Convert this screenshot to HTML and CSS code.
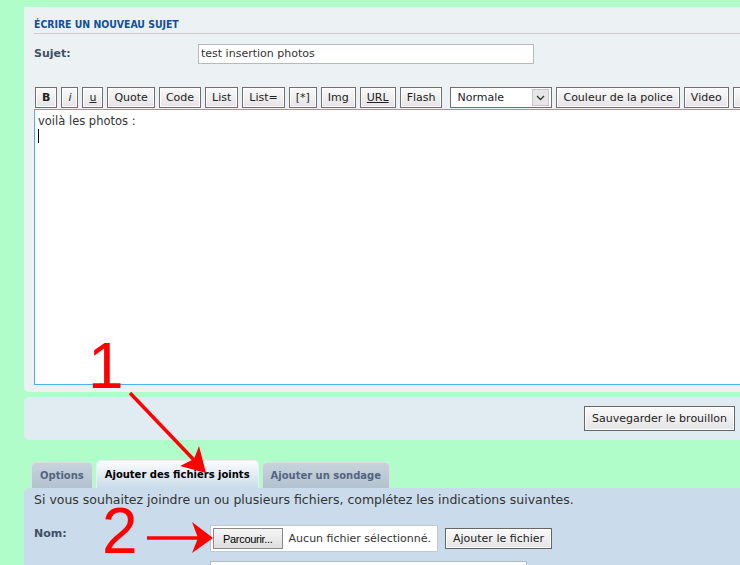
FILE: index.html
```html
<!DOCTYPE html>
<html lang="fr">
<head>
    <meta charset="UTF-8">
    <title>Écrire un nouveau sujet</title>
    <link rel="stylesheet" href="styles.css">
</head>
<body>
    <div class="page">
        <div class="panel compose">
            <h3 class="title">Écrire un nouveau sujet</h3>
            <div class="field">
                <label class="label">Sujet:</label>
                <div class="text-input">test insertion photos</div>
            </div>
            <div class="toolbar">
                <span class="btn bold">B</span>
                <span class="btn italic">i</span>
                <span class="btn under">u</span>
                <span class="btn">Quote</span>
                <span class="btn">Code</span>
                <span class="btn">List</span>
                <span class="btn">List=</span>
                <span class="btn">[*]</span>
                <span class="btn">Img</span>
                <span class="btn under">URL</span>
                <span class="btn">Flash</span>
                <span class="select">Normale<span class="select-arrow"><svg width="9" height="6" viewBox="0 0 9 6"><path d="M1 1 L4.5 4.5 L8 1" fill="none" stroke="#333" stroke-width="1.3"/></svg></span></span>
                <span class="btn">Couleur de la police</span>
                <span class="btn">Video</span>
                <span class="btn">Lien</span>
            </div>
            <div class="editor">voilà les photos :<br><span class="caret"></span></div>
        </div>

        <div class="panel actions">
            <span class="btn big">Sauvegarder le brouillon</span>
        </div>

        <div class="tabs">
            <span class="tab">Options</span>
            <span class="tab active">Ajouter des fichiers joints</span>
            <span class="tab">Ajouter un sondage</span>
        </div>

        <div class="panel attach">
            <p class="hint">Si vous souhaitez joindre un ou plusieurs fichiers, complétez les indications suivantes.</p>
            <div class="field">
                <label class="label wide">Nom:</label>
                <div class="file-input">
                    <span class="browse">Parcourir...</span>
                    <span class="file-name">Aucun fichier sélectionné.</span>
                </div>
                <span class="btn big add">Ajouter le fichier</span>
            </div>
            <div class="field next">
                <label class="label wide"></label>
                <div class="text-input long"></div>
            </div>
        </div>
    </div>

    <!-- annotations drawn over the screenshot -->
    <div class="num one">1</div>
    <div class="num two">2</div>
    <svg class="arrows" width="740" height="565" viewBox="0 0 740 565">
        <line x1="130" y1="393" x2="194" y2="460" stroke="#f00" stroke-width="3.5"/>
        <polygon points="206,473 180,466 194,459 199,446" fill="#f00"/>
        <line x1="147" y1="538" x2="198" y2="538" stroke="#f00" stroke-width="3.5"/>
        <polygon points="213,538 192,522 198,538 192,553" fill="#f00"/>
    </svg>
</body>
</html>
```

FILE: styles.css
```css
html, body {
    margin: 0;
    overflow: hidden;
}

body {
    background-color: #b1fdc9;
    font-family: "DejaVu Sans", Verdana, sans-serif;
    color: #333;
    position: relative;
    width: 740px;
    height: 565px;
}

.page {
    padding: 7px 0 0 24px;
    width: 800px;
}

.panel {
    border-radius: 0 0 5px 5px;
}

/* compose box */
.compose {
    background-color: #ecf1f3;
    padding: 10px 10px 7px 10px;
}

.title {
    margin: 0;
    font-family: "DejaVu Sans Condensed", "DejaVu Sans", sans-serif;
    font-size: 10.4px;
    line-height: 14px;
    font-weight: bold;
    text-transform: uppercase;
    color: #115098;
    padding-bottom: 2px;
    border-bottom: 1px solid #ccc;
}

.field {
    display: flex;
    align-items: flex-start;
    margin-top: 10px;
}

.label {
    width: 164px;
    flex: none;
    font-size: 11px;
    font-weight: bold;
    color: #425067;
    padding-top: 3px;
}

.label.wide {
    width: 176px;
}

.text-input {
    width: 332px;
    height: 18px;
    border: 1px solid #b4bac0;
    background: #fff;
    font-size: 11px;
    line-height: 18px;
    padding-left: 2px;
    color: #333;
}

.toolbar {
    display: flex;
    gap: 4px;
    margin-top: 23px;
    margin-left: 1px;
    white-space: nowrap;
}

.btn {
    display: inline-flex;
    align-items: center;
    height: 19px;
    padding: 0 6px;
    font-size: 11px;
    color: #222;
    border: 1px solid #707070;
    box-shadow: inset 0 0 0 1px #fff;
    background: linear-gradient(#fafafa, #e4e4e4);
}

.btn.bold {
    font-weight: bold;
}

.btn.italic {
    font-style: italic;
}

.btn.under {
    text-decoration: underline;
}

.select {
    display: inline-flex;
    align-items: center;
    justify-content: space-between;
    width: 94px;
    height: 19px;
    padding-left: 6px;
    margin-left: 4px;
    box-sizing: content-box;
    font-size: 11px;
    color: #222;
    background: #fff;
    border: 1px solid #707070;
}

.select-arrow {
    display: flex;
    align-items: center;
    justify-content: center;
    width: 15px;
    height: 15px;
    margin-right: 2px;
    background: #e6e6e6;
    border: 1px solid #c8c8c8;
}

.editor {
    margin-top: 1px;
    width: 740px;
    height: 270px;
    padding: 4px 3px 0 3px;
    background: #fff;
    border: 1px solid #4db2ea;
    font-size: 11.5px;
    line-height: 14px;
    color: #333;
}

.caret {
    display: inline-block;
    width: 1px;
    height: 14px;
    background: #000;
    margin-top: 1px;
}

/* save draft */
.actions {
    margin-top: 5px;
    background-color: #e1ebf2;
    padding: 9px 0 9px 560px;
    border-radius: 5px;
}

.btn.big {
    height: 23px;
    padding: 0 7px;
    font-size: 11px;
    border-color: #666;
}

/* tabs */
.tabs {
    display: flex;
    align-items: flex-end;
    gap: 3px;
    margin: 20px 0 0 7px;
    height: 28px;
}

.tab {
    display: flex;
    align-items: center;
    height: 26px;
    padding: 0 8px;
    font-family: "DejaVu Sans Condensed", "DejaVu Sans", sans-serif;
    font-size: 11.1px;
    font-weight: bold;
    color: #536482;
    background: linear-gradient(#c8d3dc, #b2c2cf);
    border-radius: 5px 5px 0 0;
    box-sizing: border-box;
    border: 1px solid #d8e1e8;
    border-bottom: none;
}

.tab.active {
    height: 28px;
    color: #000;
    background: linear-gradient(#fbfdfe, #cadceb);
    border-color: #e8eef3;
}

/* attachments */
.attach {
    background-color: #cadceb;
    padding: 4px 10px 20px 10px;
    border-radius: 5px 0 0 0;
}

.hint {
    margin: 0;
    font-size: 12.5px;
    line-height: 16px;
    color: #333;
}

.attach .field {
    margin-top: 17px;
    align-items: center;
}

.attach .label {
    align-self: flex-start;
    padding-top: 2px;
}

.file-input {
    display: flex;
    align-items: center;
    gap: 6px;
    width: 222px;
    height: 25px;
    padding: 0 2px;
    background: #fff;
    border: 1px solid #c2c8cd;
}

.browse {
    display: flex;
    align-items: center;
    height: 19px;
    padding: 0 9px;
    font-family: "Liberation Sans", Arial, sans-serif;
    font-size: 11px;
    letter-spacing: -0.3px;
    color: #000;
    border: 1px solid #8a8a8a;
    background: linear-gradient(#f6f6f6, #dedede);
}

.file-name {
    font-size: 11px;
    color: #333;
    white-space: nowrap;
}

.btn.add {
    height: 19px;
    margin-left: 7px;
    font-size: 11px;
}

.attach .field.next {
    margin-top: 9px;
}

.text-input.long {
    width: 313px;
}

/* red annotations */
.num {
    position: absolute;
    font-family: "Liberation Sans", Arial, sans-serif;
    font-size: 64px;
    line-height: 1;
    color: #f00;
}

.num.one {
    left: 88px;
    top: 334px;
}

.num.two {
    left: 102px;
    top: 499px;
}

.arrows {
    position: absolute;
    left: 0;
    top: 0;
}
```
